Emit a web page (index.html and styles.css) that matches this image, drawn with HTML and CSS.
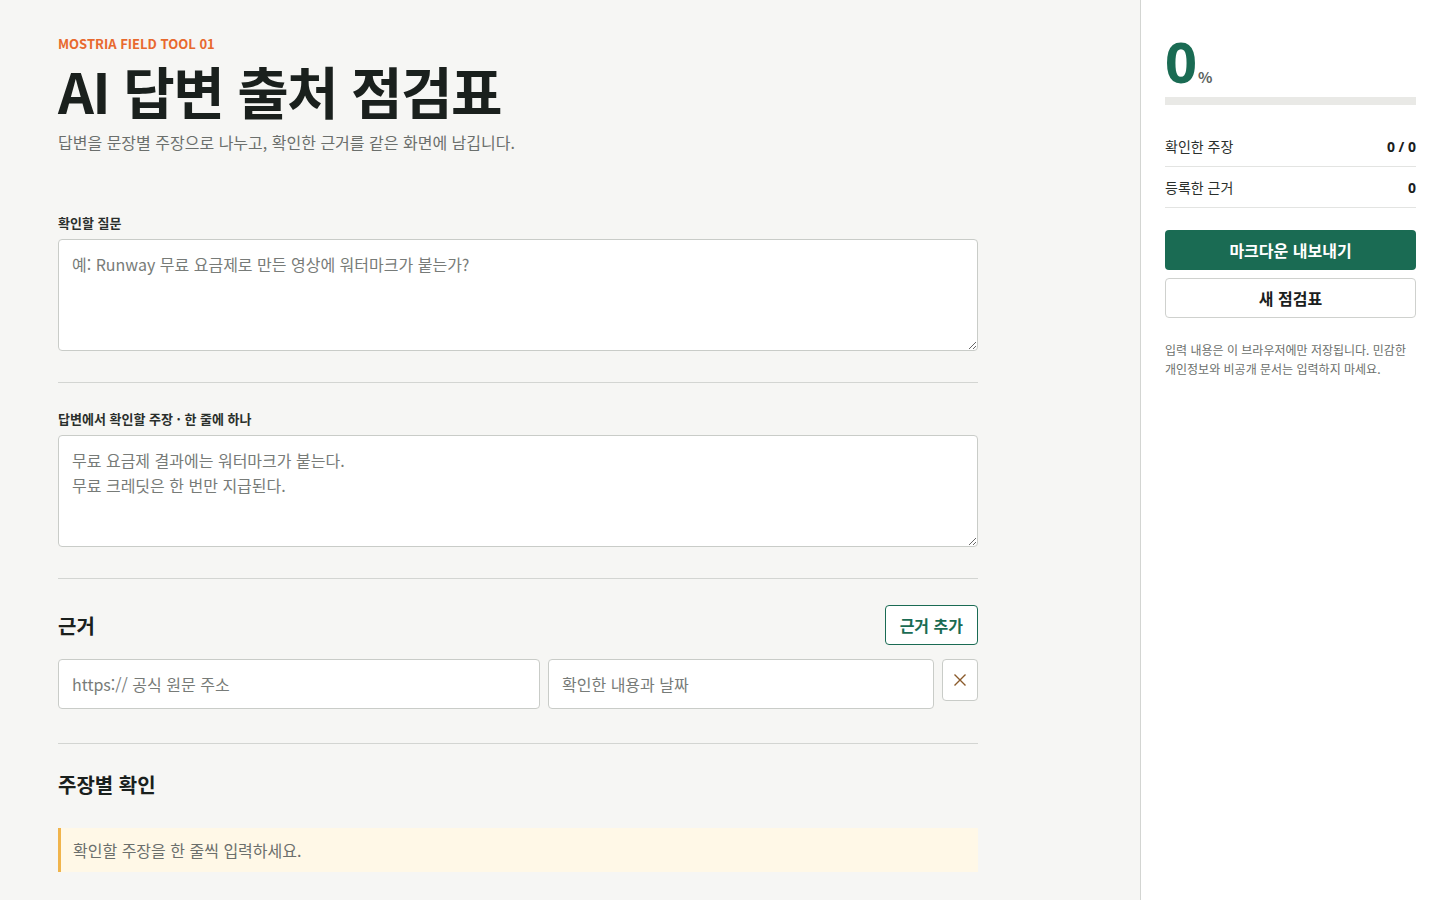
FILE: index.html
```html
<!DOCTYPE html>
<html lang="ko">
<head>
  <meta charset="UTF-8">
  <meta name="viewport" content="width=device-width, initial-scale=1.0">
  <title>AI 답변 출처 점검표</title>
  <link rel="stylesheet" href="styles.css">
</head>
<body>

  <div class="layout">
    <main class="main">
      <header class="page-head">
        <p class="eyebrow">MOSTRIA FIELD TOOL 01</p>
        <h1>AI 답변 출처 점검표</h1>
        <p class="lead">답변을 문장별 주장으로 나누고, 확인한 근거를 같은 화면에 남깁니다.</p>
      </header>

      <section class="block">
        <label class="field-label" for="question">확인할 질문</label>
        <textarea id="question" placeholder="예: Runway 무료 요금제로 만든 영상에 워터마크가 붙는가?"></textarea>
      </section>

      <section class="block">
        <label class="field-label" for="claims">답변에서 확인할 주장 · 한 줄에 하나</label>
        <textarea id="claims" placeholder="무료 요금제 결과에는 워터마크가 붙는다.&#10;무료 크레딧은 한 번만 지급된다."></textarea>
      </section>

      <section class="block">
        <div class="section-head">
          <h2>근거</h2>
          <button class="btn-outline" type="button">근거 추가</button>
        </div>
        <div class="source-row">
          <input class="source-url" type="text" placeholder="https:// 공식 원문 주소">
          <input class="source-note" type="text" placeholder="확인한 내용과 날짜">
          <button class="btn-remove" type="button" aria-label="삭제">
            <svg width="14" height="14" viewBox="0 0 14 14"><path d="M1.5 1.5 L12.5 12.5 M12.5 1.5 L1.5 12.5" stroke="#8a5a2b" stroke-width="1.4" fill="none"/></svg>
          </button>
        </div>
      </section>

      <section class="block last">
        <h2 class="claims-title">주장별 확인</h2>
        <div class="notice">확인할 주장을 한 줄씩 입력하세요.</div>
      </section>
    </main>

    <aside class="sidebar">
      <div class="score"><span class="score-num">0</span><span class="score-unit">%</span></div>
      <div class="progress"><div class="progress-fill" style="width: 0%"></div></div>

      <div class="stat-row"><span>확인한 주장</span><strong>0 / 0</strong></div>
      <div class="stat-row"><span>등록한 근거</span><strong>0</strong></div>

      <button class="btn-primary" type="button">마크다운 내보내기</button>
      <button class="btn-secondary" type="button">새 점검표</button>

      <p class="side-note">입력 내용은 이 브라우저에만 저장됩니다. 민감한 개인정보와 비공개 문서는 입력하지 마세요.</p>
    </aside>
  </div>

</body>
</html>
```

FILE: styles.css
```css
* {
  box-sizing: border-box;
}

body {
  font-family: "Noto Sans CJK KR", "Noto Sans", sans-serif;
  margin: 0;
  padding: 0;
  background-color: #f6f6f4;
  color: #1b211e;
}

.layout {
  display: flex;
  height: 100vh;
  overflow: hidden;
}

.main {
  width: 1140px;
  padding: 34px 162px 0 58px;
}

.page-head {
  margin-bottom: 60px;
}

.eyebrow {
  margin: 0;
  font-size: 13px;
  font-weight: 700;
  color: #e8692e;
  line-height: 20px;
}

h1 {
  margin: 8px 0 0;
  font-size: 56px;
  font-weight: 700;
  line-height: 56px;
  letter-spacing: -1.6px;
  color: #1a201d;
}

.lead {
  margin: 13px 0 0;
  font-size: 16px;
  color: #6b6f6c;
  line-height: 22px;
}

.block {
  padding-bottom: 31px;
  margin-bottom: 26px;
  border-bottom: 1px solid #d3d5d2;
}

.block.last {
  border-bottom: none;
}

.field-label {
  display: block;
  font-size: 13px;
  font-weight: 700;
  color: #2a2f2c;
  line-height: 20px;
  margin-bottom: 6px;
}

textarea {
  display: block;
  width: 100%;
  height: 112px;
  padding: 12px 13px;
  font-family: inherit;
  font-size: 16px;
  line-height: 25px;
  color: #1b211e;
  background: #fff;
  border: 1px solid #c9ccc8;
  border-radius: 4px;
  resize: vertical;
}

textarea::placeholder,
input::placeholder {
  color: #777b78;
}

.section-head {
  display: flex;
  justify-content: space-between;
  align-items: center;
  margin-bottom: 14px;
}

h2 {
  margin: 0;
  font-size: 20px;
  font-weight: 700;
  color: #1a201d;
}

.btn-outline {
  height: 40px;
  padding: 0 14px;
  font-family: inherit;
  font-size: 16px;
  font-weight: 700;
  color: #1a6b53;
  background: #fff;
  border: 1px solid #1a6b53;
  border-radius: 4px;
  cursor: pointer;
}

.source-row {
  display: flex;
  gap: 8px;
  align-items: flex-start;
  padding-bottom: 3px;
}

.source-row input {
  height: 50px;
  padding: 0 13px;
  font-family: inherit;
  font-size: 16px;
  background: #fff;
  border: 1px solid #c9ccc8;
  border-radius: 4px;
}

.source-url {
  width: 482px;
}

.source-note {
  flex: 1;
}

.btn-remove {
  width: 36px;
  height: 42px;
  display: flex;
  align-items: center;
  justify-content: center;
  background: #fff;
  border: 1px solid #c9ccc8;
  border-radius: 4px;
  cursor: pointer;
  padding: 0;
}

.claims-title {
  margin: 14px 0 29px;
}

.notice {
  padding: 11px 12px;
  font-size: 16px;
  line-height: 22px;
  color: #6b6f6c;
  background: #fff8e7;
  border-left: 3px solid #f0b44c;
}

.sidebar {
  width: 300px;
  padding: 33px 24px 24px 24px;
  background: #fff;
  border-left: 1px solid #d3d5d2;
}

.score {
  display: flex;
  align-items: baseline;
  line-height: 1;
}

.score-num {
  font-family: "Noto Sans", sans-serif;
  font-size: 56px;
  font-weight: 700;
  color: #1a6b53;
  letter-spacing: -1px;
}

.score-unit {
  font-size: 15px;
  font-weight: 700;
  color: #5c635f;
  margin-left: 2px;
}

.progress {
  height: 8px;
  margin-top: 8px;
  margin-bottom: 21px;
  background: #e9e9e6;
}

.progress-fill {
  height: 100%;
  background: #1a6b53;
}

.stat-row {
  display: flex;
  justify-content: space-between;
  align-items: center;
  height: 41px;
  font-size: 14px;
  color: #2a2f2c;
  border-bottom: 1px solid #e3e4e2;
}

.stat-row strong {
  font-family: "Noto Sans", sans-serif;
  font-size: 14px;
  font-weight: 700;
  color: #1a201d;
}

.btn-primary,
.btn-secondary {
  display: block;
  width: 100%;
  height: 40px;
  font-family: inherit;
  font-size: 16px;
  font-weight: 700;
  border-radius: 4px;
  cursor: pointer;
}

.btn-primary {
  margin-top: 22px;
  color: #fff;
  background: #1a6b53;
  border: none;
}

.btn-secondary {
  margin-top: 8px;
  color: #1a201d;
  background: #fff;
  border: 1px solid #cfd1ce;
}

.side-note {
  margin: 22px 0 0;
  font-size: 12px;
  line-height: 19px;
  color: #6b6f6c;
}
```
